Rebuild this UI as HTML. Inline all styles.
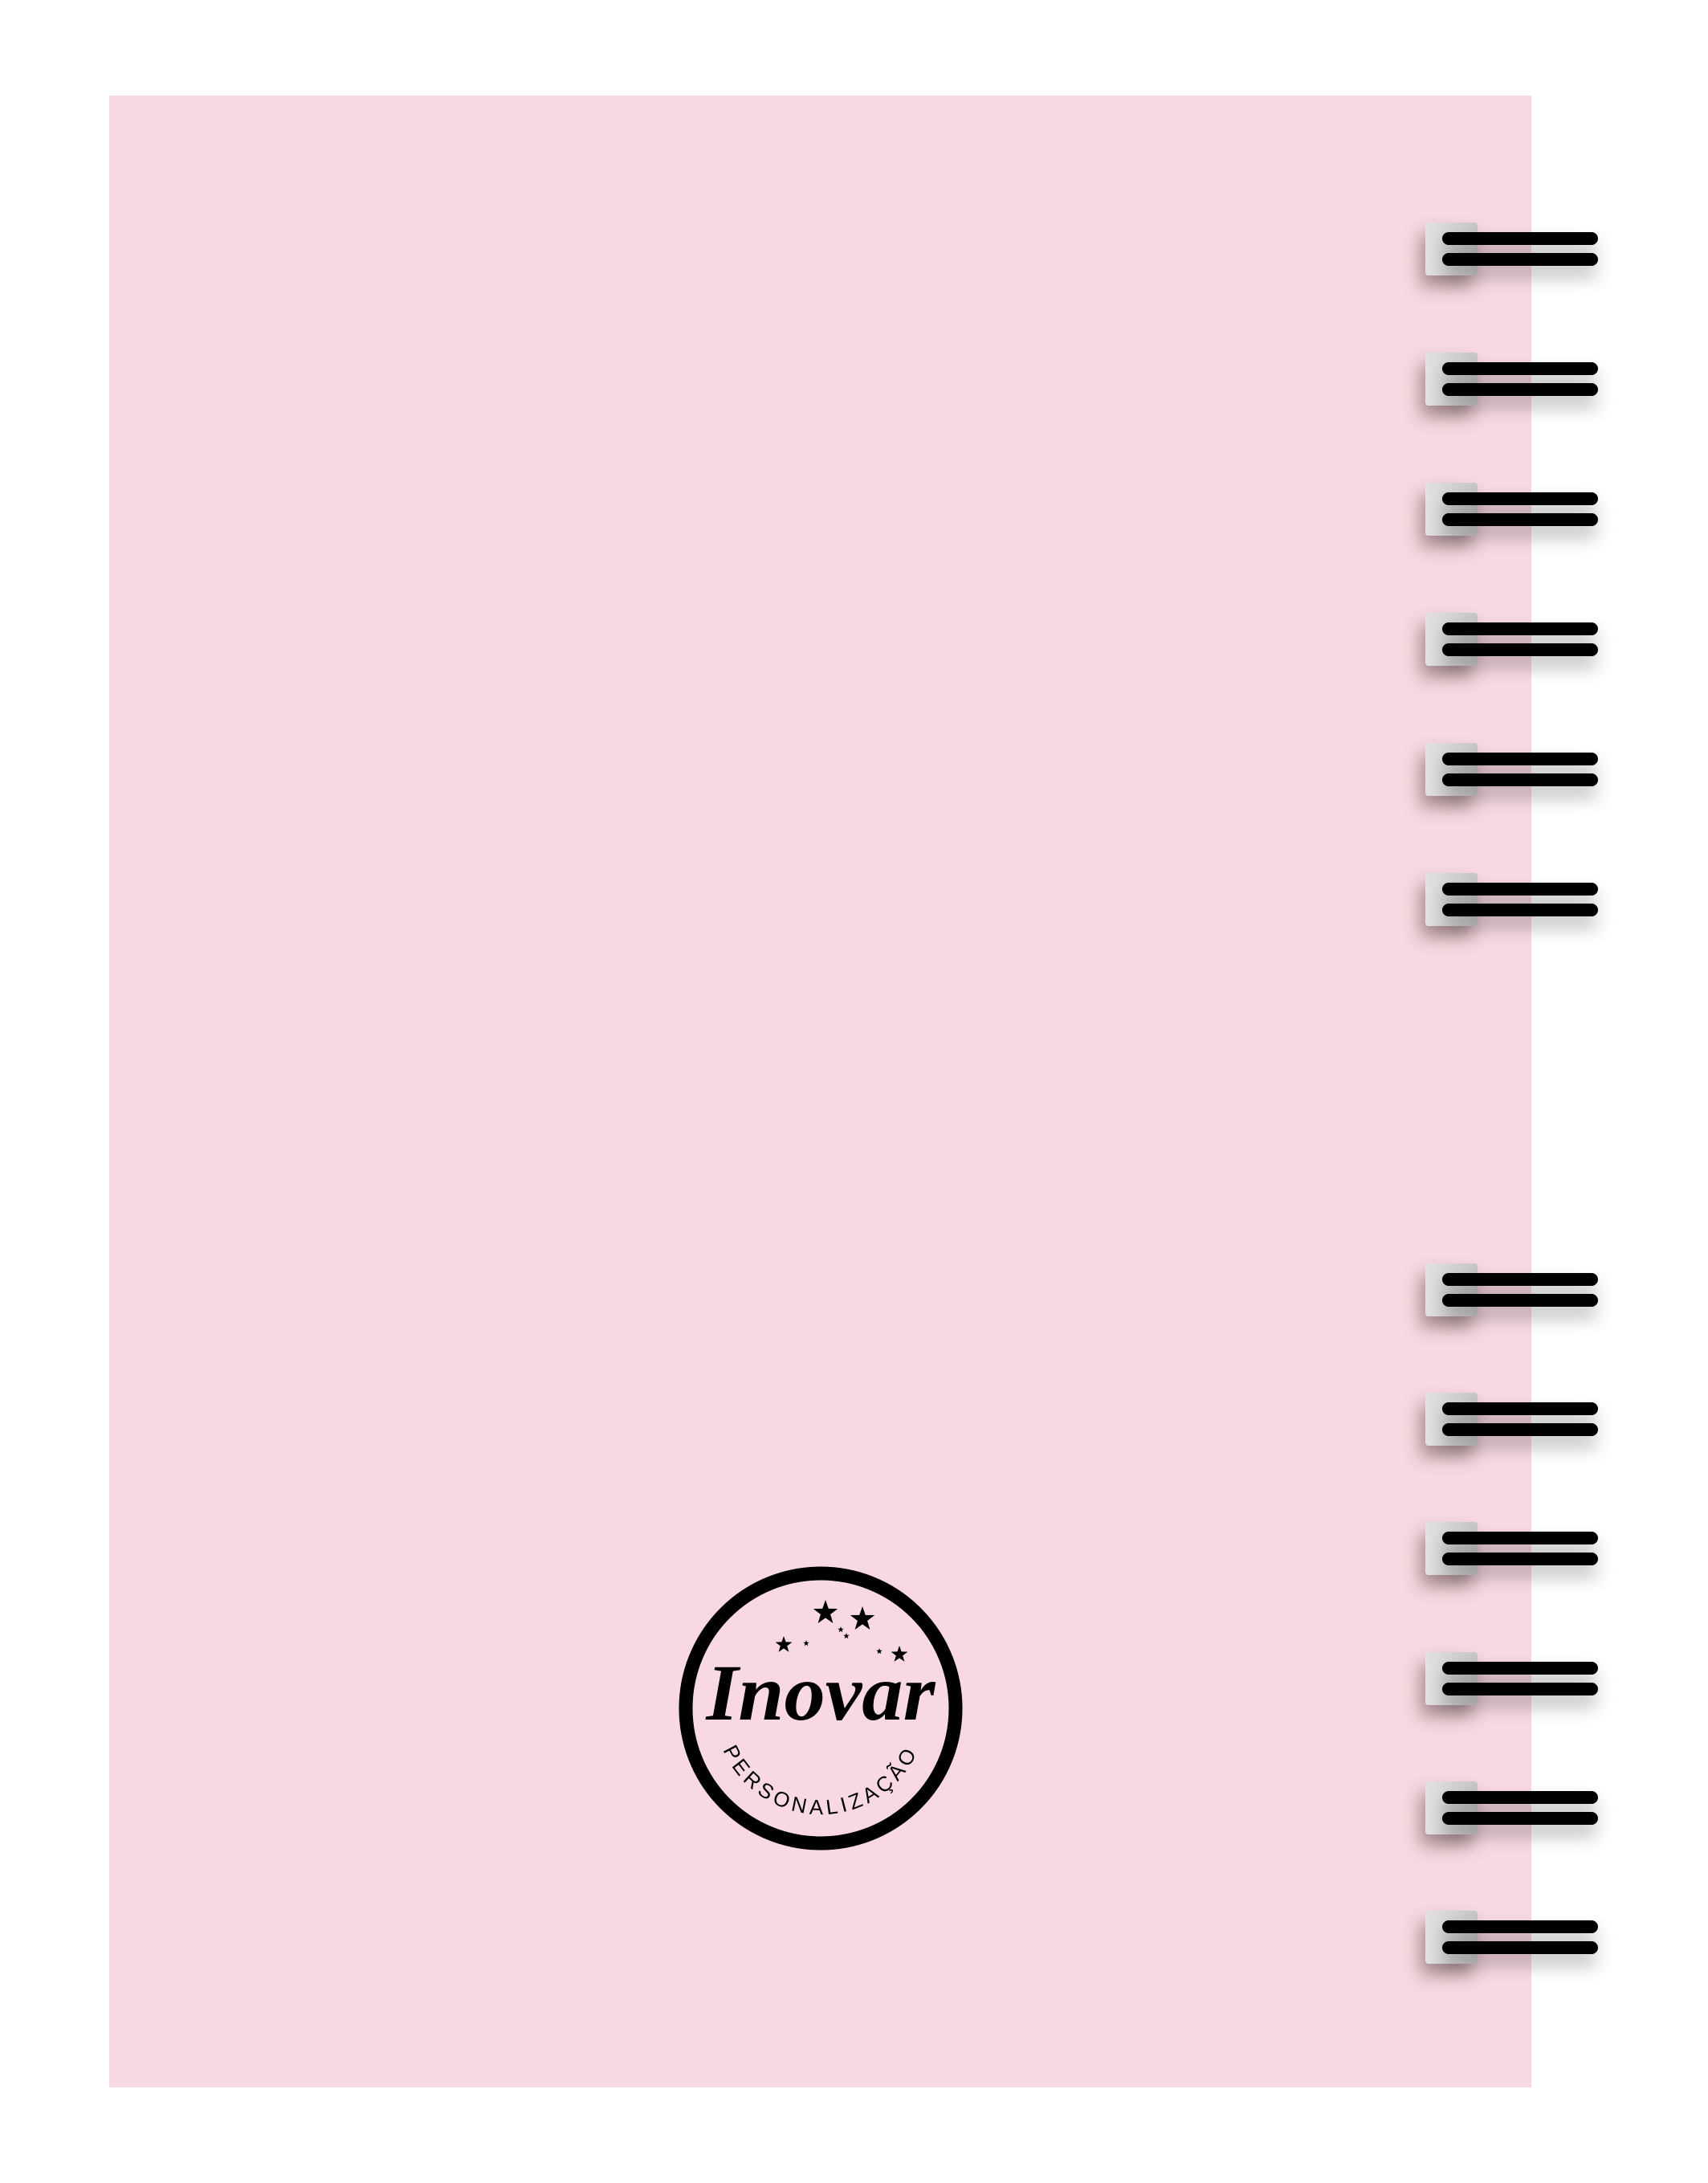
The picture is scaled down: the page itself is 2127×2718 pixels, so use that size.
<!DOCTYPE html>
<html><head><meta charset="utf-8"><style>
html,body{margin:0;padding:0;background:#fff;}
body{width:2127px;height:2718px;position:relative;overflow:hidden;}
.pink{position:absolute;left:136px;top:119px;width:1771px;height:2480px;background:#f8d9e1;}
.ring{position:absolute;left:1775px;width:215px;height:66px;}
.blk{position:absolute;left:0;top:0;width:65px;height:66px;border-radius:4px;background:linear-gradient(90deg,#e2e2e2,#c4c4c4);box-shadow:-6px 14px 22px rgba(60,40,40,.45);}
.bar{position:absolute;left:21px;width:194px;height:16px;border-radius:8px;background:#000;box-shadow:0 14px 22px rgba(0,0,0,.28);}
</style></head><body>
<div class="pink"></div>
<div class="ring" style="top:277px"><div class="blk"></div><div class="bar" style="top:12px"></div><div class="bar" style="top:38px"></div></div>
<div class="ring" style="top:439px"><div class="blk"></div><div class="bar" style="top:12px"></div><div class="bar" style="top:38px"></div></div>
<div class="ring" style="top:601px"><div class="blk"></div><div class="bar" style="top:12px"></div><div class="bar" style="top:38px"></div></div>
<div class="ring" style="top:763px"><div class="blk"></div><div class="bar" style="top:12px"></div><div class="bar" style="top:38px"></div></div>
<div class="ring" style="top:925px"><div class="blk"></div><div class="bar" style="top:12px"></div><div class="bar" style="top:38px"></div></div>
<div class="ring" style="top:1087px"><div class="blk"></div><div class="bar" style="top:12px"></div><div class="bar" style="top:38px"></div></div>
<div class="ring" style="top:1573px"><div class="blk"></div><div class="bar" style="top:12px"></div><div class="bar" style="top:38px"></div></div>
<div class="ring" style="top:1734px"><div class="blk"></div><div class="bar" style="top:12px"></div><div class="bar" style="top:38px"></div></div>
<div class="ring" style="top:1895px"><div class="blk"></div><div class="bar" style="top:12px"></div><div class="bar" style="top:38px"></div></div>
<div class="ring" style="top:2057px"><div class="blk"></div><div class="bar" style="top:12px"></div><div class="bar" style="top:38px"></div></div>
<div class="ring" style="top:2218px"><div class="blk"></div><div class="bar" style="top:12px"></div><div class="bar" style="top:38px"></div></div>
<div class="ring" style="top:2379px"><div class="blk"></div><div class="bar" style="top:12px"></div><div class="bar" style="top:38px"></div></div>

<svg style="position:absolute;left:822px;top:1920px" width="400" height="400" viewBox="0 0 400 400">
<defs>
<path id="st" d="M0,-1 L0.235,-0.324 L0.951,-0.309 L0.38,0.124 L0.588,0.809 L0,0.4 L-0.588,0.809 L-0.38,0.124 L-0.951,-0.309 L-0.235,-0.324 Z"/>
<path id="arc" d="M 70 230 A 132 132 0 0 0 330 230"/>
</defs>
<circle cx="200" cy="207" r="168" fill="none" stroke="#000" stroke-width="17"/>
<g transform="translate(8,18)">
<g fill="#000">
<use href="#st" transform="translate(198,70) scale(16)"/>
<use href="#st" transform="translate(244,78) scale(16)"/>
<use href="#st" transform="translate(146,110) scale(11)"/>
<use href="#st" transform="translate(174,108) scale(4)"/>
<use href="#st" transform="translate(217,91) scale(4)"/>
<use href="#st" transform="translate(224,99) scale(4)"/>
<use href="#st" transform="translate(265,118) scale(4)"/>
<use href="#st" transform="translate(290,122) scale(11)"/>
</g>
<text x="192" y="203" text-anchor="middle" font-family="Liberation Serif, serif" font-style="italic" font-weight="bold" font-size="100" fill="#000" textLength="285" lengthAdjust="spacingAndGlyphs">Inovar</text>
</g>
<text font-family="Liberation Sans, sans-serif" font-size="26" letter-spacing="5" fill="#000"><textPath href="#arc" startOffset="50%" text-anchor="middle">PERSONALIZAÇÃO</textPath></text>
</svg>
</body></html>
